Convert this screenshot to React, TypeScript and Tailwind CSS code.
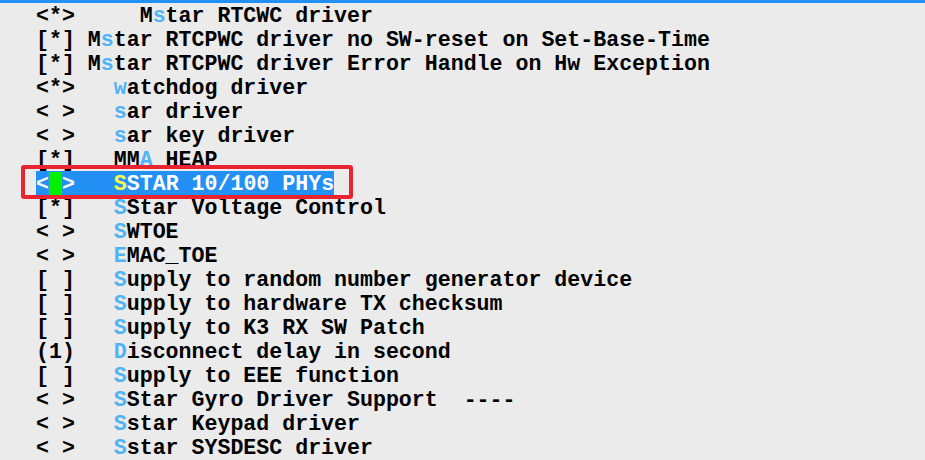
import React from 'react';

// [prefix, plain lead, hotkey letter, rest]
const items: [string, string, string, string][] = [
  ['<*>     ', 'M', 's', 'tar RTCWC driver'],
  ['[*] ', 'M', 's', 'tar RTCPWC driver no SW-reset on Set-Base-Time'],
  ['[*] ', 'M', 's', 'tar RTCPWC driver Error Handle on Hw Exception'],
  ['<*>   ', '', 'w', 'atchdog driver'],
  ['< >   ', '', 's', 'ar driver'],
  ['< >   ', '', 's', 'ar key driver'],
  ['[*]   ', 'MM', 'A', ' HEAP'],
  ['< >   ', '', 'S', 'STAR 10/100 PHYs'],
  ['[*]   ', '', 'S', 'Star Voltage Control'],
  ['< >   ', '', 'S', 'WTOE'],
  ['< >   ', '', 'E', 'MAC_TOE'],
  ['[ ]   ', '', 'S', 'upply to random number generator device'],
  ['[ ]   ', '', 'S', 'upply to hardware TX checksum'],
  ['[ ]   ', '', 'S', 'upply to K3 RX SW Patch'],
  ['(1)   ', '', 'D', 'isconnect delay in second'],
  ['[ ]   ', '', 'S', 'upply to EEE function'],
  ['< >   ', '', 'S', 'Star Gyro Driver Support  ----'],
  ['< >   ', '', 'S', 'star Keypad driver'],
  ['< >   ', '', 'S', 'star SYSDESC driver'],
];

const SELECTED = 7;

export default function App() {
  return (
    <div className="relative w-[925px] h-[460px] overflow-hidden bg-[#ebebeb]">
      <div className="h-[3px] bg-[#2290f4]" />
      <div className="pl-[36px] font-['Liberation_Mono','Courier_New',monospace] font-bold text-[21.6px] leading-[24px] text-black">
        {items.map(([pre, lead, key, rest], i) =>
          i === SELECTED ? (
            <div key={i} className="whitespace-pre h-[24px]">
              <span className="inline-block pt-px bg-[#2290f4] text-white">
                {'<'}
                <span className="bg-[#00f000]"> </span>
                {'>   '}
                <span className="text-[#ffff4a]">{key}</span>
                {rest}
              </span>
            </div>
          ) : (
            <div key={i} className="whitespace-pre h-[24px] pt-px">
              {pre}
              {lead}
              <span className="text-[#4fb3f6]">{key}</span>
              {rest}
            </div>
          )
        )}
      </div>
      <div className="absolute left-[21px] top-[165px] w-[332px] h-[34px] border-4 border-[#ea2330] rounded-[3px]" />
    </div>
  );
}
